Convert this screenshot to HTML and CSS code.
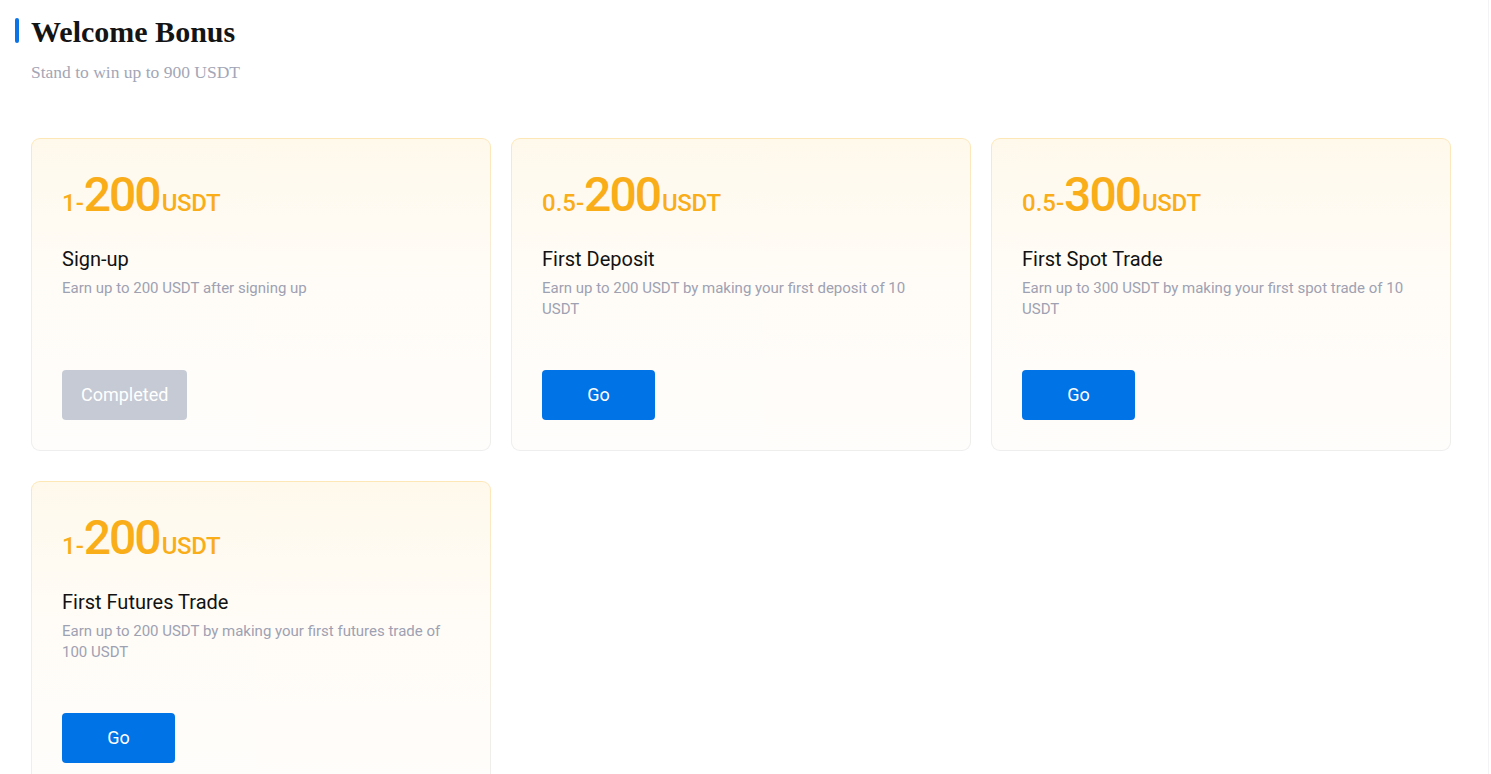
FILE: index.html
```html
<!DOCTYPE html>
<html lang="en">
<head>
<meta charset="utf-8">
<title>Welcome Bonus</title>
<link rel="stylesheet" href="styles.css">
</head>
<body>
<div class="page">
  <header class="header">
    <div class="title-row">
      <span class="title-bar"></span>
      <h1 class="title">Welcome Bonus</h1>
    </div>
    <p class="subtitle">Stand to win up to 900 USDT</p>
  </header>

  <section class="cards">
    <div class="card">
      <div class="amount"><span class="amount-min">1-</span><span class="amount-max">200</span><span class="amount-unit">USDT</span></div>
      <h2 class="card-title">Sign-up</h2>
      <p class="card-desc">Earn up to 200 USDT after signing up</p>
      <div class="card-action"><button class="btn btn-done">Completed</button></div>
    </div>
    <div class="card">
      <div class="amount"><span class="amount-min">0.5-</span><span class="amount-max">200</span><span class="amount-unit">USDT</span></div>
      <h2 class="card-title">First Deposit</h2>
      <p class="card-desc">Earn up to 200 USDT by making your first deposit of 10 USDT</p>
      <div class="card-action"><button class="btn btn-go">Go</button></div>
    </div>
    <div class="card">
      <div class="amount"><span class="amount-min">0.5-</span><span class="amount-max">300</span><span class="amount-unit">USDT</span></div>
      <h2 class="card-title">First Spot Trade</h2>
      <p class="card-desc">Earn up to 300 USDT by making your first spot trade of 10 USDT</p>
      <div class="card-action"><button class="btn btn-go">Go</button></div>
    </div>
    <div class="card">
      <div class="amount"><span class="amount-min">1-</span><span class="amount-max">200</span><span class="amount-unit">USDT</span></div>
      <h2 class="card-title">First Futures Trade</h2>
      <p class="card-desc">Earn up to 200 USDT by making your first futures trade of 100 USDT</p>
      <div class="card-action"><button class="btn btn-go">Go</button></div>
    </div>
  </section>
</div>
</body>
</html>
```

FILE: styles.css
```css
* { box-sizing: border-box; }

html, body {
  margin: 0;
  padding: 0;
  background: #ffffff;
}

body {
  font-family: Roboto, "Liberation Sans", Arial, sans-serif;
}

.page {
  width: 1489px;
  min-height: 100vh;
  border-right: 1px solid #f3f3f5;
  padding: 15px 0 40px 15px;
}

.header {
  margin: 0;
}

.title-row {
  display: flex;
  align-items: flex-start;
  gap: 12px;
}

.title-bar {
  display: block;
  width: 4px;
  height: 25px;
  margin-top: 3px;
  border-radius: 2px;
  background: #0b73e6;
}

.title {
  margin: 0;
  font-family: "Liberation Serif", "Times New Roman", serif;
  font-size: 30px;
  line-height: 34px;
  font-weight: 700;
  color: #141414;
}

.subtitle {
  margin: 11px 0 0 16px;
  font-family: "Liberation Serif", "Times New Roman", serif;
  font-size: 17.5px;
  line-height: 24px;
  color: #a3a6b6;
}

.cards {
  margin: 54px 0 0 16px;
  display: grid;
  grid-template-columns: repeat(3, 460px);
  column-gap: 20px;
  row-gap: 30px;
}

.card {
  border: 1px solid transparent;
  border-radius: 9px;
  padding: 30px;
  background:
    linear-gradient(180deg, #fff9ec 0%, #fffcf7 45%, #fffdfb 100%) padding-box,
    linear-gradient(180deg, #fde7b6 0%, #f6eedc 45%, #eeeeee 100%) border-box;
}

.amount {
  line-height: 52px;
  height: 52px;
  color: #f9ad18;
  font-weight: 500;
  white-space: nowrap;
}

.amount-min,
.amount-unit {
  font-size: 24px;
}

.amount-unit {
  letter-spacing: -0.3px;
}

.amount-max {
  font-size: 48px;
  letter-spacing: -2px;
  margin-right: 2px;
}

.card-title {
  margin: 24px 0 0;
  font-size: 20px;
  line-height: 28px;
  font-weight: 400;
  color: #121212;
}

.card-desc {
  margin: 5px 0 0;
  min-height: 42px;
  font-size: 15px;
  line-height: 21px;
  color: #9ea1b2;
}

.card-action {
  margin-top: 50px;
  display: flex;
}

.btn {
  height: 50px;
  min-width: 113px;
  padding: 0 19px 1px;
  border: 0;
  border-radius: 4px;
  font-family: Roboto, "Liberation Sans", Arial, sans-serif;
  font-size: 18px;
  color: #ffffff;
}

.btn-go {
  background: #0073e6;
}

.btn-done {
  background: #c5cad4;
}
```
